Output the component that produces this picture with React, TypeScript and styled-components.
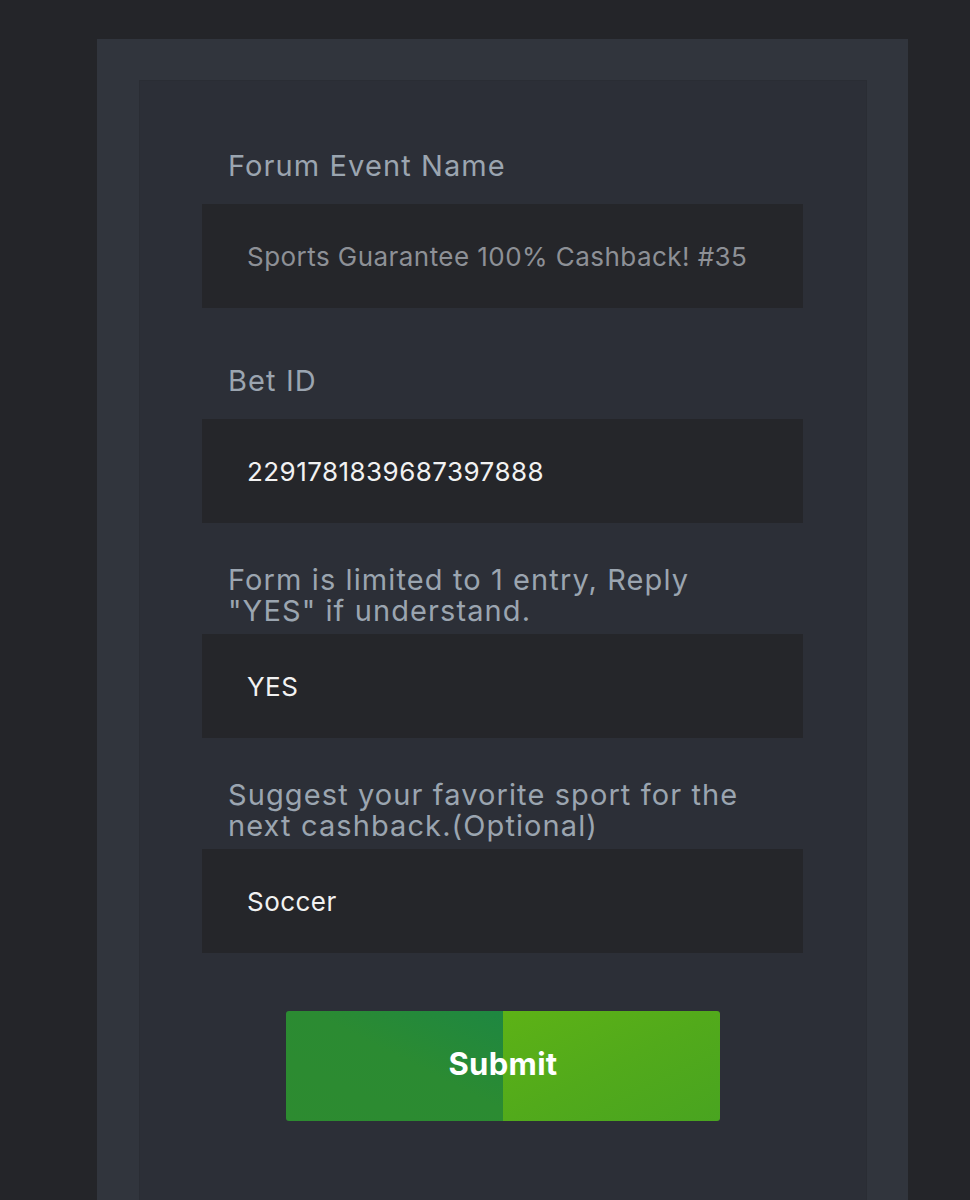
import React from "react";
import styled, { createGlobalStyle } from "styled-components";

const Global = createGlobalStyle`
  html, body {
    margin: 0;
    padding: 0;
    background: #242529;
  }
  body {
    font-family: Inter, "Noto Sans", sans-serif;
  }
  * { box-sizing: border-box; }
`;

const Outer = styled.div`
  margin: 39px 0 0 97px;
  width: 811px;
  padding: 41px 41px 40px 42px;
  background: #31353d;
`;

const Inner = styled.form`
  background: #2c2f37;
  border: 1px solid #2a2d34;
  padding: 45px 62px 120px 62px;
  display: flex;
  flex-direction: column;
`;

const Field = styled.div`
  display: flex;
  flex-direction: column;
  & + & {
    margin-top: 33px;
  }
`;

const Label = styled.label`
  height: 78px;
  display: flex;
  align-items: center;
  padding-left: 26px;
  padding-right: 40px;
  font-size: 29px;
  line-height: 31px;
  letter-spacing: 1.1px;
  color: #9ba5b0;
`;

const Input = styled.input<{ $muted?: boolean }>`
  display: block;
  width: 601px;
  height: 104px;
  border: none;
  outline: none;
  background: #25262a;
  padding: 0 0 0 45px;
  font-family: Inter, "Noto Sans", sans-serif;
  font-size: 26px;
  letter-spacing: 0.45px;
  color: ${(p) => (p.$muted ? "#8d9096" : "#f2f2f2")};
`;

const Actions = styled.div`
  display: flex;
  justify-content: center;
  margin-top: 58px;
`;

const SubmitButton = styled.button`
  width: 434px;
  height: 110px;
  padding: 0 0 5px 0;
  border: none;
  border-radius: 3px;
  color: #ffffff;
  font-family: Inter, "Noto Sans", sans-serif;
  font-weight: 700;
  font-size: 31px;
  letter-spacing: 0.3px;
  cursor: pointer;
  background-color: #3a9a28;
  background-image:
    linear-gradient(to top right, #2d8b30 0%, #2b8b32 55%, #1e8741 100%),
    linear-gradient(to bottom right, #5db216 0%, #52aa1b 50%, #49a420 100%);
  background-size: 50% 100%, 50% 100%;
  background-position: left top, right top;
  background-repeat: no-repeat;
`;

const fields = [
  { label: "Forum Event Name", value: "Sports Guarantee 100% Cashback! #35", muted: true },
  { label: "Bet ID", value: "2291781839687397888" },
  { label: "Form is limited to 1 entry, Reply \"YES\" if understand.", value: "YES" },
  { label: "Suggest your favorite sport for the next cashback.(Optional)", value: "Soccer" },
];

export default function App() {
  return (
    <>
      <Global />
      <Outer>
        <Inner onSubmit={(e) => e.preventDefault()}>
          {fields.map((f, i) => (
            <Field key={i}>
              <Label htmlFor={`f${i}`}>{f.label}</Label>
              <Input id={`f${i}`} value={f.value} readOnly $muted={f.muted} />
            </Field>
          ))}
          <Actions>
            <SubmitButton type="submit">Submit</SubmitButton>
          </Actions>
        </Inner>
      </Outer>
    </>
  );
}
